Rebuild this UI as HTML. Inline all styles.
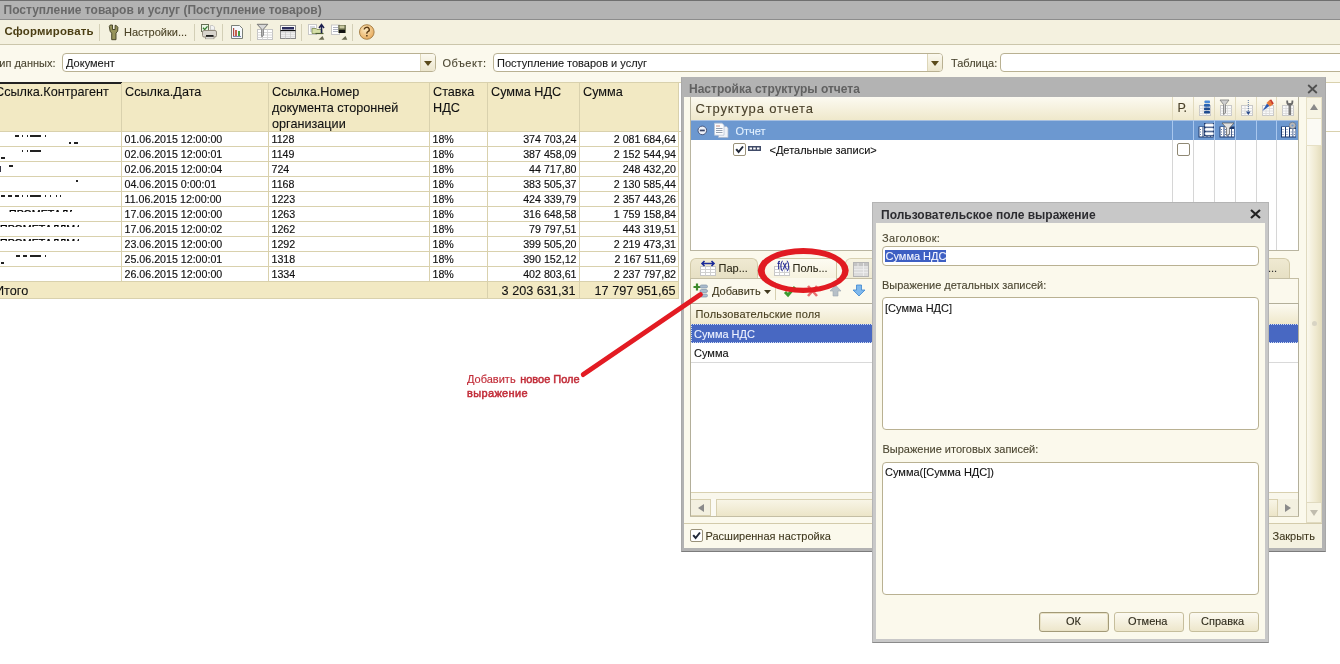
<!DOCTYPE html>
<html><head><meta charset="utf-8">
<style>
*{box-sizing:border-box;margin:0;padding:0}
html,body{width:1340px;height:664px;overflow:hidden;background:#fff}
body{position:relative;will-change:transform;font-family:"Liberation Sans",sans-serif;font-size:11px;color:#000}
.a{position:absolute}
.t{position:absolute;white-space:nowrap;line-height:1;-webkit-text-stroke-width:0.1px}
svg{position:absolute;overflow:visible}
.vsep{position:absolute;top:24px;width:1px;height:17px;background:#d3cfb6}
.sh{font-size:10.67px;color:#111;-webkit-text-stroke:0.15px #111}
.hd{font-size:12.67px;color:#111;-webkit-text-stroke:0.1px #111}
.lbl{color:#4a4530}
.inp{position:absolute;background:#fff;border:1px solid #b9b192;border-radius:4px}
.ddb{position:absolute;top:0;right:0;width:15px;height:17px;border-left:1px solid #ddd6b8;background:linear-gradient(#fbf9ef,#ece6cd);border-radius:0 3px 3px 0}
.ddb:after{content:"";position:absolute;left:3px;top:7px;border-left:4px solid transparent;border-right:4px solid transparent;border-top:5px solid #5a4a1a}
</style></head><body>
<!-- title bar -->
<div class="a" style="left:0;top:0;width:1340px;height:20px;background:#b3b3b3;border-top:1px solid #6f6f6f;border-bottom:1px solid #8c8c8c"></div>
<div class="t" style="left:3.5px;top:4px;font-size:12px;font-weight:bold;-webkit-text-stroke-width:0;color:#686868">Поступление товаров и услуг (Поступление товаров)</div>
<!-- toolbar -->
<div class="a" style="left:0;top:20px;width:1340px;height:25px;background:#f4f1df;border-bottom:1px solid #cbc6ab"></div>
<div class="t" style="left:4.5px;top:26px;font-size:11.4px;font-weight:bold;-webkit-text-stroke-width:0;letter-spacing:0.2px;color:#4a3d12">Сформировать</div>
<div class="vsep" style="left:99px"></div>
<div class="t" style="left:124px;top:26.8px;font-size:11px;color:#4b4326">Настройки...</div>
<div class="vsep" style="left:194px"></div>
<div class="vsep" style="left:222px"></div>
<div class="vsep" style="left:250px"></div>
<div class="vsep" style="left:301px"></div>
<div class="vsep" style="left:352px"></div>
<!-- form area -->
<div class="a" style="left:0;top:45px;width:1340px;height:37px;background:#fbf9ed"></div>
<div class="t lbl" style="left:-7px;top:58px">Тип данных:</div>
<div class="inp" style="left:62px;top:53px;width:374px;height:19px"><div class="ddb"></div></div>
<div class="t" style="left:66px;top:58px;color:#1a1a1a">Документ</div>
<div class="t lbl" style="left:442.5px;top:58px;letter-spacing:0.5px">Объект:</div>
<div class="inp" style="left:493px;top:53px;width:450px;height:19px"><div class="ddb"></div></div>
<div class="t" style="left:497px;top:58px;color:#1a1a1a">Поступление товаров и услуг</div>
<div class="t lbl" style="left:951px;top:58px">Таблица:</div>
<div class="inp" style="left:1000px;top:53px;width:400px;height:19px"></div>
<!-- toolbar icons -->
<svg style="left:0;top:0" width="400" height="45" viewBox="0 0 400 45">
 <!-- wrench -->
 <path d="M109.3 26.5L110.2 25h2.3v4.5h2.6V25.3l1.2.2 1.6 1.8-.2 3.8-1.7 2V39.7h-4.3V33.2l-1.6-2z" fill="#96935a" stroke="#3e3c22" stroke-width="0.9"/>
 <path d="M111.5 34h4" stroke="#b9b67a" stroke-width="0"/>
 <!-- printer -->
 <rect x="201.5" y="24.5" width="7" height="7" fill="#eaf5e4" stroke="#667055" stroke-width="1"/>
 <path d="M203 27.8l1.7 1.8 2.8-3.3" fill="none" stroke="#2f7a2a" stroke-width="1.3"/>
 <path d="M210.5 25.5h2.5l1.5 1.5v3h-4z" fill="#f3f3f3" stroke="#b8b8b8" stroke-width="0.7"/>
 <rect x="202.5" y="30.5" width="14" height="6.5" rx="1.5" fill="#d8d4cc" stroke="#8a8274" stroke-width="0.9"/>
 <rect x="206" y="35" width="7.5" height="2" fill="#1a1a1a"/>
 <rect x="205.5" y="37" width="8.5" height="1.8" fill="#fff" stroke="#8a8274" stroke-width="0.6"/>
 <!-- chart doc -->
 <path d="M231.5 25.5h8l3 3v10h-11z" fill="#f6f8fc" stroke="#7a7f78" stroke-width="1"/>
 <rect x="233" y="28" width="1.2" height="8" fill="#b04a40"/>
 <rect x="235" y="30" width="2" height="6" fill="#c86050"/>
 <rect x="238" y="31" width="2" height="5" fill="#4a9a40"/>
 <path d="M233 36.5h8" stroke="#5a6a9a" stroke-width="0.8"/>
 <!-- filter table -->
 <rect x="257.5" y="29.5" width="15" height="10" fill="#fff" stroke="#c4c4c4"/>
 <path d="M262.5 29.5v10M267.5 29.5v10M257.5 32.5h15M257.5 35h15M257.5 37.5h15" stroke="#d4d4d4" stroke-width="0.9"/>
 <path d="M257.2 24.3h10.6l-4.5 5v6.2l-1.6 1.2v-7.4z" fill="#d8d8d8" stroke="#6a6a6a" stroke-width="0.9"/>
 <!-- table -->
 <rect x="280.5" y="25.5" width="15" height="13" fill="#fafafa" stroke="#8a8a8a"/>
 <rect x="282" y="27" width="12" height="2.5" fill="#2a2c5c"/>
 <path d="M280.5 30.6h15" stroke="#111" stroke-width="1.2"/>
 <path d="M285.5 31v7.5M290.5 31v7.5M281 32.8h14M281 34.8h14M281 36.8h14" stroke="#c4c4c4" stroke-width="0.7"/>
 <!-- doc folder up -->
 <rect x="308.5" y="24.5" width="8" height="10" fill="#fff" stroke="#c8c8c8"/>
 <path d="M310 27h5M310 29h5M310 31h5" stroke="#9aa0b0" stroke-width="0.8"/>
 <path d="M312 28.5h4l1 1h5v4h-10z" fill="#d6e0a8" stroke="#7c8a50" stroke-width="0.8"/>
 <path d="M315.5 33.5h8" stroke="#4a5a30" stroke-width="1.2"/>
 <path d="M321.5 33V26M319 28l2.5-3.5 2.5 3.5" fill="none" stroke="#1c2050" stroke-width="1.5"/>
 <path d="M318.5 39.7h5.8l-1.8-3.7z" fill="#6a6a50"/>
 <!-- doc save -->
 <rect x="331.5" y="25" width="8" height="9.5" fill="#fff" stroke="#c8c8c8"/>
 <path d="M333 27.5h5M333 29.5h5M333 31.5h5" stroke="#9aa0b0" stroke-width="0.8"/>
 <rect x="338.3" y="25" width="7.5" height="8" fill="#5a5e3e"/>
 <rect x="339.5" y="25.5" width="5" height="3" fill="#c8c8a0"/>
 <rect x="339" y="30" width="6" height="3" fill="#111"/>
 <path d="M341.5 39.7h5.8l-1.8-3.7z" fill="#6a6a50"/>
 <!-- help -->
 <defs><radialGradient id="hg" cx="0.4" cy="0.35" r="0.7"><stop offset="0" stop-color="#fbe7bc"/><stop offset="1" stop-color="#e7a858"/></radialGradient></defs>
 <circle cx="366.8" cy="32" r="7.3" fill="url(#hg)" stroke="#a8824a" stroke-width="1"/>
 <path d="M364.3 29.6a2.5 2.3 0 1 1 3.6 2.1c-.9.5-1.1 1-1.1 2" fill="none" stroke="#5a3a14" stroke-width="1.4"/>
 <rect x="366.1" y="35" width="1.5" height="1.5" fill="#5a3a14"/>
</svg>
<!-- sheet -->
<div class="a" style="left:0;top:82px;width:1340px;height:582px;background:#fff"></div>
<div class="a" style="left:0;top:83px;width:678px;height:48px;background:#f2e9c3"></div>
<div class="a" style="left:0;top:282px;width:678px;height:16px;background:#f2e9c3"></div>
<div class="a" style="left:0;top:82px;width:1340px;height:1px;background:#d9d1ad"></div>
<div class="a" style="left:0;top:131px;width:1340px;height:1px;background:#d9d1ad"></div>
<div class="a" style="left:0;top:146px;width:679px;height:1px;background:#d9d1ad"></div>
<div class="a" style="left:0;top:161px;width:679px;height:1px;background:#d9d1ad"></div>
<div class="a" style="left:0;top:176px;width:679px;height:1px;background:#d9d1ad"></div>
<div class="a" style="left:0;top:191px;width:679px;height:1px;background:#d9d1ad"></div>
<div class="a" style="left:0;top:206px;width:679px;height:1px;background:#d9d1ad"></div>
<div class="a" style="left:0;top:221px;width:679px;height:1px;background:#d9d1ad"></div>
<div class="a" style="left:0;top:236px;width:679px;height:1px;background:#d9d1ad"></div>
<div class="a" style="left:0;top:251px;width:679px;height:1px;background:#d9d1ad"></div>
<div class="a" style="left:0;top:266px;width:679px;height:1px;background:#d9d1ad"></div>
<div class="a" style="left:0;top:281px;width:679px;height:1px;background:#d9d1ad"></div>
<div class="a" style="left:0;top:298px;width:679px;height:1px;background:#d9d1ad"></div>
<div class="a" style="left:0;top:82px;width:122px;height:2px;background:#222"></div>
<div class="a" style="left:121px;top:83px;width:1px;height:199px;background:#d9d1ad"></div>
<div class="a" style="left:268px;top:83px;width:1px;height:199px;background:#d9d1ad"></div>
<div class="a" style="left:429px;top:83px;width:1px;height:199px;background:#d9d1ad"></div>
<div class="a" style="left:487px;top:83px;width:1px;height:215px;background:#d9d1ad"></div>
<div class="a" style="left:579px;top:83px;width:1px;height:215px;background:#d9d1ad"></div>
<div class="a" style="left:678px;top:83px;width:1px;height:215px;background:#d9d1ad"></div>
<div class="t hd" style="left:-5px;top:86.28px;">Ссылка.Контрагент</div>
<div class="t hd" style="left:125px;top:86.28px;">Ссылка.Дата</div>
<div class="t hd" style="left:272px;top:86.28px;">Ссылка.Номер</div>
<div class="t hd" style="left:272px;top:102.28px;">документа сторонней</div>
<div class="t hd" style="left:272px;top:118.28px;">организации</div>
<div class="t hd" style="left:433px;top:86.28px;">Ставка</div>
<div class="t hd" style="left:433px;top:102.28px;">НДС</div>
<div class="t hd" style="left:491px;top:86.28px;">Сумма НДС</div>
<div class="t hd" style="left:583px;top:86.28px;">Сумма</div>
<div class="t sh" style="left:124.5px;top:134.47px;">01.06.2015 12:00:00</div>
<div class="t sh" style="left:271.5px;top:134.47px;">1128</div>
<div class="t sh" style="left:432.5px;top:134.47px;">18%</div>
<div class="t sh" style="right:763.5px;top:134.47px">374 703,24</div>
<div class="t sh" style="right:664px;top:134.47px">2 081 684,64</div>
<div class="t sh" style="left:124.5px;top:149.47px;">02.06.2015 12:00:01</div>
<div class="t sh" style="left:271.5px;top:149.47px;">1149</div>
<div class="t sh" style="left:432.5px;top:149.47px;">18%</div>
<div class="t sh" style="right:763.5px;top:149.47px">387 458,09</div>
<div class="t sh" style="right:664px;top:149.47px">2 152 544,94</div>
<div class="t sh" style="left:124.5px;top:164.47px;">02.06.2015 12:00:04</div>
<div class="t sh" style="left:271.5px;top:164.47px;">724</div>
<div class="t sh" style="left:432.5px;top:164.47px;">18%</div>
<div class="t sh" style="right:763.5px;top:164.47px">44 717,80</div>
<div class="t sh" style="right:664px;top:164.47px">248 432,20</div>
<div class="t sh" style="left:124.5px;top:179.47px;">04.06.2015 0:00:01</div>
<div class="t sh" style="left:271.5px;top:179.47px;">1168</div>
<div class="t sh" style="left:432.5px;top:179.47px;">18%</div>
<div class="t sh" style="right:763.5px;top:179.47px">383 505,37</div>
<div class="t sh" style="right:664px;top:179.47px">2 130 585,44</div>
<div class="t sh" style="left:124.5px;top:194.47px;">11.06.2015 12:00:00</div>
<div class="t sh" style="left:271.5px;top:194.47px;">1223</div>
<div class="t sh" style="left:432.5px;top:194.47px;">18%</div>
<div class="t sh" style="right:763.5px;top:194.47px">424 339,79</div>
<div class="t sh" style="right:664px;top:194.47px">2 357 443,26</div>
<div class="t sh" style="left:124.5px;top:209.47px;">17.06.2015 12:00:00</div>
<div class="t sh" style="left:271.5px;top:209.47px;">1263</div>
<div class="t sh" style="left:432.5px;top:209.47px;">18%</div>
<div class="t sh" style="right:763.5px;top:209.47px">316 648,58</div>
<div class="t sh" style="right:664px;top:209.47px">1 759 158,84</div>
<div class="t sh" style="left:124.5px;top:224.47px;">17.06.2015 12:00:02</div>
<div class="t sh" style="left:271.5px;top:224.47px;">1262</div>
<div class="t sh" style="left:432.5px;top:224.47px;">18%</div>
<div class="t sh" style="right:763.5px;top:224.47px">79 797,51</div>
<div class="t sh" style="right:664px;top:224.47px">443 319,51</div>
<div class="t sh" style="left:124.5px;top:239.47px;">23.06.2015 12:00:00</div>
<div class="t sh" style="left:271.5px;top:239.47px;">1292</div>
<div class="t sh" style="left:432.5px;top:239.47px;">18%</div>
<div class="t sh" style="right:763.5px;top:239.47px">399 505,20</div>
<div class="t sh" style="right:664px;top:239.47px">2 219 473,31</div>
<div class="t sh" style="left:124.5px;top:254.47px;">25.06.2015 12:00:01</div>
<div class="t sh" style="left:271.5px;top:254.47px;">1318</div>
<div class="t sh" style="left:432.5px;top:254.47px;">18%</div>
<div class="t sh" style="right:763.5px;top:254.47px">390 152,12</div>
<div class="t sh" style="right:664px;top:254.47px">2 167 511,69</div>
<div class="t sh" style="left:124.5px;top:269.47px;">26.06.2015 12:00:00</div>
<div class="t sh" style="left:271.5px;top:269.47px;">1334</div>
<div class="t sh" style="left:432.5px;top:269.47px;">18%</div>
<div class="t sh" style="right:763.5px;top:269.47px">402 803,61</div>
<div class="t sh" style="right:664px;top:269.47px">2 237 797,82</div>
<div class="t hd" style="left:-5px;top:284.88px;">Итого</div>
<div class="t hd" style="right:764.5px;top:284.88px">3 203 631,31</div>
<div class="t hd" style="right:664.5px;top:284.88px">17 797 951,65</div>
<div class="a" style="left:15px;top:135px;width:4px;height:1.5px;background:#222"></div>
<div class="a" style="left:22px;top:135px;width:1px;height:1.5px;background:#222"></div>
<div class="a" style="left:27px;top:135px;width:1px;height:1.5px;background:#222"></div>
<div class="a" style="left:30px;top:135px;width:11px;height:1.5px;background:#222"></div>
<div class="a" style="left:45px;top:135px;width:1px;height:1.5px;background:#222"></div>
<div class="a" style="left:69px;top:142px;width:2px;height:1.5px;background:#222"></div>
<div class="a" style="left:74px;top:142px;width:4px;height:1.5px;background:#222"></div>
<div class="a" style="left:22px;top:150px;width:1px;height:1.5px;background:#222"></div>
<div class="a" style="left:27px;top:150px;width:1px;height:1.5px;background:#222"></div>
<div class="a" style="left:30px;top:150px;width:11px;height:1.5px;background:#222"></div>
<div class="a" style="left:1px;top:157px;width:4px;height:1.5px;background:#222"></div>
<div class="a" style="left:9px;top:165px;width:4px;height:1.5px;background:#222"></div>
<div class="a" style="left:0px;top:166px;width:1px;height:6px;background:#334"></div>
<div class="a" style="left:76px;top:180px;width:2px;height:1.5px;background:#222"></div>
<div class="a" style="left:1px;top:195px;width:4px;height:1.5px;background:#222"></div>
<div class="a" style="left:8px;top:195px;width:4px;height:1.5px;background:#222"></div>
<div class="a" style="left:15px;top:195px;width:4px;height:1.5px;background:#222"></div>
<div class="a" style="left:22px;top:195px;width:1px;height:1.5px;background:#222"></div>
<div class="a" style="left:27px;top:195px;width:1px;height:1.5px;background:#222"></div>
<div class="a" style="left:30px;top:195px;width:11px;height:1.5px;background:#222"></div>
<div class="a" style="left:45px;top:195px;width:1px;height:1.5px;background:#222"></div>
<div class="a" style="left:50px;top:195px;width:1px;height:1.5px;background:#222"></div>
<div class="a" style="left:56px;top:195px;width:1px;height:1.5px;background:#222"></div>
<div class="a" style="left:60px;top:195px;width:1px;height:1.5px;background:#222"></div>
<div class="a" style="left:9px;top:210px;width:63px;height:2px;overflow:hidden"><div class="t" style="left:0;top:-1.2px;font-size:10.67px;color:#000;-webkit-text-stroke:0.3px #000">ПРОМЕТАЛЛМАШ</div></div>
<div class="a" style="left:0px;top:225px;width:79px;height:2px;overflow:hidden"><div class="t" style="left:0;top:-1.2px;font-size:10.67px;color:#000;-webkit-text-stroke:0.3px #000">ПРОМЕТАЛЛМАШ</div></div>
<div class="a" style="left:0px;top:239px;width:79px;height:2px;overflow:hidden"><div class="t" style="left:0;top:-1.2px;font-size:10.67px;color:#000;-webkit-text-stroke:0.3px #000">ПРОМЕТАЛЛМАШ</div></div>
<div class="a" style="left:16px;top:255px;width:4px;height:1.5px;background:#222"></div>
<div class="a" style="left:23px;top:255px;width:4px;height:1.5px;background:#222"></div>
<div class="a" style="left:30px;top:255px;width:11px;height:1.5px;background:#222"></div>
<div class="a" style="left:45px;top:255px;width:1px;height:1.5px;background:#222"></div>
<div class="a" style="left:1px;top:262px;width:3px;height:1.5px;background:#222"></div>
<!-- ===== dialog 1 ===== -->
<div class="a" style="left:681px;top:77px;width:645px;height:475px;background:#b3b3b3;border:1px solid #a8a8a8;border-top-color:#b3b3b3;border-bottom-color:#7c7c7c"></div>
<div class="a" style="left:684px;top:97px;width:638px;height:451px;background:#fbf9ec"></div>
<div class="t" style="left:689px;top:83px;font-size:12px;font-weight:bold;-webkit-text-stroke-width:0;color:#616161">Настройка структуры отчета</div>
<svg style="left:1307px;top:84px" width="11" height="10" viewBox="0 0 11 10"><path d="M1.2 1L9.8 9M9.8 1L1.2 9" stroke="#505050" stroke-width="1.8"/></svg>

<!-- tree box -->
<div class="a" style="left:690px;top:97px;width:609px;height:154px;background:#fff;border:1px solid #b9b5a0;border-top:0"></div>
<div class="a" style="left:691px;top:97px;width:607px;height:23px;background:linear-gradient(#fcfaf1,#efe8cb)"></div>
<div class="t" style="left:695.5px;top:102px;font-size:13px;letter-spacing:0.84px;color:#4a412a">Структура отчета</div>
<div class="t" style="left:1177.5px;top:102px;font-size:12.5px;color:#4a412a">Р.</div>
<div class="a" style="left:691px;top:120px;width:607px;height:20px;background:#6c98d0;border-top:1px solid #a8c0e0"></div>
<!-- column lines -->
<div class="a" style="left:1172px;top:97px;width:1px;height:23px;background:#e2dbbe"></div>
<div class="a" style="left:1193px;top:97px;width:1px;height:23px;background:#e2dbbe"></div>
<div class="a" style="left:1214px;top:97px;width:1px;height:23px;background:#e2dbbe"></div>
<div class="a" style="left:1235px;top:97px;width:1px;height:23px;background:#e2dbbe"></div>
<div class="a" style="left:1256px;top:97px;width:1px;height:23px;background:#e2dbbe"></div>
<div class="a" style="left:1276px;top:97px;width:1px;height:23px;background:#e2dbbe"></div>
<div class="a" style="left:1172px;top:120px;width:1px;height:20px;background:#a9c7ee"></div>
<div class="a" style="left:1193px;top:120px;width:1px;height:20px;background:#a9c7ee"></div>
<div class="a" style="left:1214px;top:120px;width:1px;height:20px;background:#a9c7ee"></div>
<div class="a" style="left:1235px;top:120px;width:1px;height:20px;background:#a9c7ee"></div>
<div class="a" style="left:1256px;top:120px;width:1px;height:20px;background:#a9c7ee"></div>
<div class="a" style="left:1276px;top:120px;width:1px;height:20px;background:#a9c7ee"></div>
<div class="a" style="left:1172px;top:140px;width:1px;height:110px;background:#d6d6d6"></div>
<div class="a" style="left:1193px;top:140px;width:1px;height:110px;background:#d6d6d6"></div>
<div class="a" style="left:1214px;top:140px;width:1px;height:110px;background:#d6d6d6"></div>
<div class="a" style="left:1235px;top:140px;width:1px;height:110px;background:#d6d6d6"></div>
<div class="a" style="left:1256px;top:140px;width:1px;height:110px;background:#d6d6d6"></div>
<div class="a" style="left:1276px;top:140px;width:1px;height:110px;background:#d6d6d6"></div>
<!-- row 1 -->
<svg style="left:697px;top:125px" width="11" height="11" viewBox="0 0 11 11"><circle cx="5.3" cy="5.4" r="4.3" fill="#eef2fa" stroke="#3a4a70" stroke-width="0.9"/><rect x="2.8" y="4.6" width="5" height="1.7" fill="#3a4466"/></svg>
<svg style="left:713px;top:122px" width="17" height="17" viewBox="0 0 17 17"><path d="M5.5 4.5h8l1.5 1.5v9.5h-9.5z" fill="#eef2f8" stroke="#aab8cc" stroke-width="0.8"/><path d="M1.5 1.2h7.5l2 2v10h-9.5z" fill="#fbfcfe" stroke="#b8c4d6" stroke-width="0.8"/><path d="M3 4h4" stroke="#c08070" stroke-width="0.9"/><path d="M3 6.5h6.5M3 8.5h6.5M3 10.5h6.5" stroke="#8a96a8" stroke-width="0.9"/></svg>
<div class="t" style="left:735.5px;top:126px;font-size:11px;color:#e2f0ff">Отчет</div>
<!-- row 2 -->
<div class="a" style="left:733px;top:143px;width:13px;height:13px;background:#fff;border:1px solid #9a927a;border-radius:2px"></div>
<svg style="left:734px;top:144px" width="11" height="11" viewBox="0 0 11 11"><path d="M2.2 5.2L4.6 8L9 2.5" fill="none" stroke="#1f2738" stroke-width="2"/></svg>
<svg style="left:748px;top:146px" width="13" height="5" viewBox="0 0 13 5"><rect x="0" y="0" width="13" height="5" fill="#404b68"/><rect x="1.5" y="1.5" width="2.5" height="2" fill="#fff"/><rect x="5.2" y="1.5" width="2.5" height="2" fill="#fff"/><rect x="9" y="1.5" width="2.5" height="2" fill="#fff"/></svg>
<div class="t" style="left:769.5px;top:145px;font-size:11px;color:#111">&lt;Детальные записи&gt;</div>
<div class="a" style="left:1177px;top:143px;width:13px;height:13px;background:#fff;border:1px solid #8f8874;border-radius:2px"></div>

<!-- header icons -->
<svg style="left:0;top:0" width="1340" height="160" viewBox="0 0 1340 160">
 <defs>
  <g id="tb"><rect x="0.5" y="0.5" width="11" height="10" fill="#fafafa" stroke="#c8c8c8"/><path d="M0.5 3.5h11M0.5 6h11M0.5 8.5h11M4 0.5v10M7.5 0.5v10" stroke="#d8d8d8" stroke-width="0.8"/></g>
  <g id="sb"><rect x="0.5" y="4.5" width="15" height="11" fill="#1e3a6e"/><g fill="#fff"><rect x="1.5" y="5" width="3" height="9.5"/><rect x="5.5" y="5" width="3" height="9.5"/><rect x="9.5" y="7" width="2.5" height="7.5"/><rect x="12.8" y="7" width="2.2" height="7.5"/></g><path d="M2.5 7v1M2.5 9.5v1M2.5 12v1M6.5 7v1M6.5 9.5v1M6.5 12v1M10.7 9.5v1M10.7 12v1M13.9 9.5v1M13.9 12v1" stroke="#4a6aa0" stroke-width="0.9"/></g>
 </defs>
 <use href="#tb" x="1199" y="105"/>
 <g fill="#2a62b0"><rect x="1204.5" y="100.5" width="5.5" height="2.8" rx="0.8" fill="#4a8ad8"/><rect x="1204" y="104" width="6" height="2.8" rx="0.8"/><rect x="1204" y="107.5" width="6" height="2.8" rx="0.8" fill="#1f4c90"/><rect x="1204" y="111" width="6" height="2.5" rx="0.8" fill="#1f4c90"/></g>
 <use href="#tb" x="1220" y="105"/>
 <path d="M1220 100h9l-3.5 4.5v8.5l-2 1.5v-10z" fill="#cfcfcf" stroke="#7a7a7a" stroke-width="0.8"/>
 <use href="#tb" x="1241" y="105"/>
 <path d="M1248.3 100v13" stroke="#4a6a9a" stroke-width="0.9" stroke-dasharray="1 1"/><path d="M1246 111.5l2.3 3.5 2.3-3.5z" fill="#2a4a8a"/>
 <use href="#tb" x="1262" y="105"/>
 <path d="M1262.5 111l4.5-7.5 3 2z" fill="#2a5ab0"/><path d="M1266.5 103l3-3 3.5 4.5-3 2z" fill="#e87a3a"/><path d="M1269.5 100l1.8-.5 2.5 4-1.5 1z" fill="#c83a2a"/>
 <use href="#tb" x="1282" y="105"/>
 <path d="M1289.8 103v12" stroke="#7a7a7a" stroke-width="2.6"/><path d="M1287.2 100.5v1.5a2.6 2.6 0 0 0 5.2 0v-1.5" fill="none" stroke="#6a6a6a" stroke-width="1.8"/>
 <use href="#sb" x="1198" y="122"/>
 <rect x="1204" y="123" width="10" height="13" fill="#1e3a6e"/><g fill="#fff" stroke="#cfd8e8" stroke-width="0.6"><rect x="1205" y="123.8" width="8.5" height="2.8" rx="1.2"/><rect x="1205" y="128" width="8.5" height="2.8" rx="1.2"/><rect x="1205" y="132.2" width="8.5" height="2.8" rx="1.2"/></g>
 <use href="#sb" x="1219" y="122"/>
 <path d="M1222 123h12l-4.5 5v6l-3 1.5v-7.5z" fill="#e2e2e2" stroke="#555" stroke-width="0.7"/>
 <use href="#sb" x="1280.5" y="122"/>
 <circle cx="1292.5" cy="125.5" r="3.3" fill="#b8b8b8" stroke="#6a7a90" stroke-width="0.8"/><circle cx="1292.5" cy="125.5" r="1.1" fill="#6c98d0"/>
</svg>

<!-- form scrollbar -->
<div class="a" style="left:1306px;top:97px;width:16px;height:426px;background:linear-gradient(90deg,#fbf9ee,#efe9cf 60%,#e2dbbb);border-left:1px solid #e0dac0"></div>
<div class="a" style="left:1306px;top:97px;width:16px;height:22px;background:#f7f4e4;border:1px solid #e6e0c6"></div>
<div class="a" style="left:1306px;top:118px;width:16px;height:28px;background:#fbfaf4;border:1px solid #e6e0c6"></div>
<svg style="left:1309px;top:103px" width="10" height="8" viewBox="0 0 10 8"><path d="M5 1L9 7H1z" fill="#8a8a8a"/></svg>
<div class="a" style="left:1306px;top:502px;width:16px;height:21px;background:#f7f4e4;border:1px solid #e0dac0"></div>
<svg style="left:1309px;top:509px" width="10" height="8" viewBox="0 0 10 8"><path d="M5 7L9 1H1z" fill="#c0bcae"/></svg><div class="a" style="left:1312px;top:321px;width:5px;height:5px;border-radius:50%;background:#d8d4c4"></div>

<!-- tabs -->
<div class="a" style="left:690px;top:258px;width:68px;height:21px;background:linear-gradient(#efe9d2,#e6dfc3);border:1px solid #d2caa8;border-bottom:0;border-radius:6px 6px 0 0"></div>
<div class="a" style="left:764px;top:258px;width:73px;height:21px;background:linear-gradient(#fdfbf2,#f6f2de);border:1px solid #cfc7a4;border-bottom:0;border-radius:5px 5px 0 0"></div>
<div class="a" style="left:845px;top:258px;width:40px;height:21px;background:linear-gradient(#f6f3e2,#eee9d3);border:1px solid #d8d1b2;border-bottom:0;border-radius:6px 6px 0 0"></div>
<div class="a" style="left:1230px;top:258px;width:60px;height:21px;background:linear-gradient(#efe9d2,#e6dfc3);border:1px solid #d2caa8;border-bottom:0;border-radius:6px 6px 0 0"></div>
<div class="t" style="left:1268px;top:263px;font-size:11px;color:#333">...</div>
<div class="t" style="left:718.5px;top:263px;font-size:11px;color:#2e2a1a">Пар...</div>
<div class="t" style="left:792.5px;top:263px;font-size:11px;color:#2e2a1a">Поль...</div>
<svg style="left:700px;top:260px" width="17" height="17" viewBox="0 0 17 17"><g fill="#fff" stroke="#c6c6c6"><rect x="0.5" y="6.5" width="15" height="9"/></g><path d="M0.5 9.5h15M0.5 12.5h15M5.5 6.5v9M10.5 6.5v9" stroke="#d0d0d0"/><path d="M2 3.5h12M4.5 1l-2.5 2.5 2.5 2.5M11.5 1l2.5 2.5-2.5 2.5" stroke="#1a2a9a" stroke-width="1.6" fill="none"/></svg>
<svg style="left:774px;top:260px" width="17" height="17" viewBox="0 0 17 17"><g fill="#fff" stroke="#c6c6c6"><rect x="0.5" y="6.5" width="15" height="9"/></g><path d="M0.5 9.5h15M0.5 12.5h15M5.5 6.5v9M10.5 6.5v9" stroke="#d0d0d0"/><text x="3.6" y="8.6" font-family="Liberation Sans" font-size="10" fill="#1a2090" stroke="#1a2090" stroke-width="0.3" textLength="12" lengthAdjust="spacingAndGlyphs">f(x)</text></svg>
<svg style="left:853px;top:262px" width="16" height="15" viewBox="0 0 16 15"><rect x="0.5" y="0.5" width="15" height="14" fill="#dcdcdc" stroke="#b4b4b4"/><rect x="1" y="1" width="14" height="3.5" fill="#c4c4c4"/><path d="M1 4.8h14M1 7.6h14M1 10.4h14M10.5 1v13M5 1v3.5" stroke="#f0f0f0" stroke-width="0.8"/></svg>

<!-- tab panel -->
<div class="a" style="left:690px;top:278px;width:609px;height:239px;background:#fbf9ed;border:1px solid #c4bea4"></div>
<div class="a" style="left:765px;top:278px;width:71px;height:1px;background:#fbf9ee"></div>
<!-- toolbar -->
<svg style="left:693px;top:283px" width="15" height="15" viewBox="0 0 15 15"><path d="M4 0.5v7M0.5 4h7" stroke="#3c8a2a" stroke-width="2.2"/><g fill="#aabbcc" stroke="#7f93a8" stroke-width="0.7"><rect x="7" y="2" width="7.5" height="3" rx="1.5"/><rect x="7" y="6.5" width="7.5" height="3" rx="1.5"/><rect x="7" y="11" width="7.5" height="3" rx="1.5"/></g></svg>
<div class="t" style="left:712px;top:286px;font-size:11px;color:#40391f">Добавить</div>
<svg style="left:764px;top:290px" width="7" height="4" viewBox="0 0 7 4"><path d="M0 0h7L3.5 4z" fill="#40391f"/></svg>
<div class="a" style="left:775px;top:282px;width:1px;height:18px;background:#d6cfb0"></div>
<svg style="left:783px;top:284px" width="14" height="14" viewBox="0 0 14 14"><path d="M2 8l3 3 7-8" stroke="#3c9a30" stroke-width="3" fill="none"/></svg>
<svg style="left:806px;top:285px" width="13" height="12" viewBox="0 0 13 12"><path d="M2 1l9 10M11 1L2 11" stroke="#e87070" stroke-width="2.6"/></svg>
<svg style="left:829px;top:284px" width="13" height="13" viewBox="0 0 13 13"><path d="M6.5 1L12 7H9v5H4V7H1z" fill="#b7c0c8" stroke="#9aa4ae" stroke-width="0.6"/></svg>
<svg style="left:852px;top:284px" width="14" height="13" viewBox="0 0 14 13"><path d="M7 12L13 6H9.5V1h-5v5H1z" fill="#7fb8ec" stroke="#3c86d0" stroke-width="0.8"/></svg>

<!-- list -->
<div class="a" style="left:690px;top:303px;width:609px;height:213px;background:#fff;border:1px solid #b3af9a"></div>
<div class="a" style="left:691px;top:304px;width:607px;height:20px;background:linear-gradient(#fcfaf1,#efe8cb)"></div>
<div class="t" style="left:695.5px;top:309px;font-size:11px;letter-spacing:0.18px;color:#463d1e">Пользовательские поля</div>
<div class="a" style="left:691px;top:324px;width:607px;height:19px;background:#4868c2;border:1px dotted #d0dcf4;border-right:0"></div>
<div class="t" style="left:694px;top:329px;font-size:11px;color:#eef2ff">Сумма НДС</div>
<div class="t" style="left:694px;top:348px;font-size:11px;color:#111">Сумма</div>
<div class="a" style="left:691px;top:362px;width:607px;height:1px;background:#d9d9d9"></div>
<div class="a" style="left:691px;top:492px;width:607px;height:8px;background:#f9f7ec;border-top:1px solid #d8d0b0"></div>
<div class="a" style="left:691px;top:499px;width:607px;height:17px;background:linear-gradient(#f8f5e6,#ece5c8);border-top:1px solid #d8d0b0"></div>
<div class="a" style="left:691px;top:499px;width:20px;height:17px;background:#f3f0e0;border:1px solid #d8d0b0;border-left:0"></div>
<div class="a" style="left:711px;top:499px;width:6px;height:17px;background:#fbfaf4;border-right:1px solid #d8d0b0"></div>
<svg style="left:697px;top:503px" width="8" height="10" viewBox="0 0 8 10"><path d="M1 5L7 1v8z" fill="#8a8a8a"/></svg>
<div class="a" style="left:1277px;top:499px;width:21px;height:17px;background:#f3f0e0;border-left:1px solid #d8d0b0"></div>
<svg style="left:1284px;top:503px" width="8" height="10" viewBox="0 0 8 10"><path d="M7 5L1 1v8z" fill="#8a8a8a"/></svg>

<!-- footer -->
<div class="a" style="left:684px;top:523px;width:638px;height:1px;background:#d3cbab"></div>
<div class="a" style="left:690px;top:529px;width:13px;height:13px;background:#fff;border:1px solid #9a927a;border-radius:2px"></div>
<svg style="left:691px;top:530px" width="11" height="11" viewBox="0 0 11 11"><path d="M2.2 5.2L4.6 8L9 2.5" fill="none" stroke="#1f2738" stroke-width="2"/></svg>
<div class="t" style="left:705.5px;top:531px;font-size:11px;color:#40391f">Расширенная настройка</div>
<div class="a" style="left:1266px;top:524px;width:56px;height:24px;background:#f4f1e0"></div>
<div class="t" style="left:1272.5px;top:531px;font-size:11px;color:#40391f">Закрыть</div>
<!-- ===== dialog 2 ===== -->
<div class="a" style="left:872px;top:202px;width:397px;height:441px;background:#c8c8c8;border:1px solid #b4b4b4;border-bottom-color:#8a8a8a"></div>
<div class="a" style="left:876px;top:223px;width:389px;height:416px;background:#fbf9ec"></div>
<div class="t" style="left:881px;top:209px;font-size:12px;font-weight:bold;-webkit-text-stroke-width:0;color:#2c2c30">Пользовательское поле выражение</div>
<svg style="left:1250px;top:208.5px" width="11" height="10" viewBox="0 0 11 10"><path d="M1 1L10 9M10 1L1 9" stroke="#222" stroke-width="2.2"/></svg>
<div class="t lbl" style="left:882px;top:233px;font-size:11px;letter-spacing:0.35px">Заголовок:</div>
<div class="inp" style="left:882px;top:246px;width:377px;height:20px"></div>
<div class="a" style="left:885px;top:249.5px;width:61px;height:12px;background:#3d5fc3"></div>
<div class="t" style="left:885.5px;top:251px;font-size:11px;color:#f4f6ff">Сумма НДС</div>
<div class="t lbl" style="left:882px;top:280px;font-size:11px">Выражение детальных записей:</div>
<div class="inp" style="left:882px;top:297px;width:377px;height:133px"></div>
<div class="t" style="left:885px;top:303px;font-size:11px;color:#111">[Сумма НДС]</div>
<div class="t lbl" style="left:882.5px;top:444px;font-size:11px">Выражение итоговых записей:</div>
<div class="inp" style="left:882px;top:462px;width:377px;height:133px"></div>
<div class="t" style="left:885px;top:467px;font-size:11px;color:#111">Сумма([Сумма НДС])</div>
<div class="a" style="left:1039px;top:612px;width:70px;height:20px;background:linear-gradient(#fcfaf1,#ede6cb);border:1px solid #a39a78;border-radius:3px;box-shadow:inset 0 0 0 1px #e9e2c6"></div>
<div class="t" style="left:1066px;top:616px;font-size:11px;color:#2e2a1a">ОК</div>
<div class="a" style="left:1114px;top:612px;width:70px;height:20px;background:linear-gradient(#fcfaf1,#ede6cb);border:1px solid #c6be9c;border-radius:3px"></div>
<div class="t" style="left:1128px;top:616px;font-size:11px;color:#2e2a1a">Отмена</div>
<div class="a" style="left:1189px;top:612px;width:70px;height:20px;background:linear-gradient(#fcfaf1,#ede6cb);border:1px solid #c6be9c;border-radius:3px"></div>
<div class="t" style="left:1201px;top:616px;font-size:11px;color:#2e2a1a">Справка</div>
<!-- annotation -->
<svg style="left:0;top:0" width="1340" height="664" viewBox="0 0 1340 664">
 <line x1="583.2" y1="374.6" x2="700.5" y2="294.5" stroke="#e31b23" stroke-width="4.8" stroke-linecap="round"/>
 <path fill-rule="evenodd" fill="#e11b22" d="M757.7 270.5a45.5 22.4 0 1 0 91 0a45.5 22.4 0 1 0 -91 0zM764.6 270.8a38.8 16.9 0 1 0 77.6 0a38.8 16.9 0 1 0 -77.6 0z"/>
</svg>
<div class="t" style="left:467px;top:374px;font-size:11px;color:#c22d39;-webkit-text-stroke:0.15px #c22d39">Добавить<span style="margin-left:4.5px;-webkit-text-stroke:0.5px #c22d39">новое Поле</span></div>
<div class="t" style="left:467px;top:388px;font-size:11px;color:#c22d39;letter-spacing:0.35px;-webkit-text-stroke:0.5px #c22d39">выражение</div>

</body></html>
